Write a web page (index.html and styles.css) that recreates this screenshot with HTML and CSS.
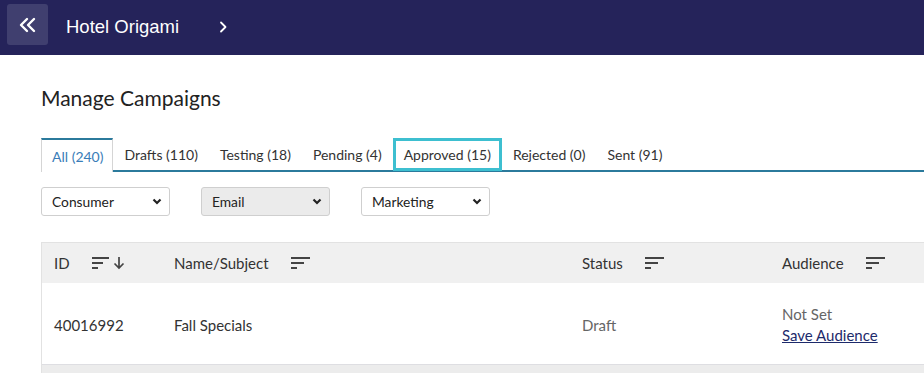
FILE: index.html
```html
<!DOCTYPE html>
<html>
<head>
<meta charset="utf-8">
<link rel="stylesheet" href="styles.css">
</head>
<body>
<header class="topbar">
  <button class="back-btn" aria-label="Back">
    <svg width="20" height="16" viewBox="0 0 20 16"><path d="M9 2 L3 8 L9 14 M16 2 L10 8 L16 14" fill="none" stroke="#fff" stroke-width="2.4" stroke-linecap="round" stroke-linejoin="round"/></svg>
  </button>
  <span class="hotel">Hotel Origami</span>
  <svg class="crumb" width="8" height="12" viewBox="0 0 8 12"><path d="M2 1.5 L6.5 6 L2 10.5" fill="none" stroke="#fff" stroke-width="1.8" stroke-linecap="round" stroke-linejoin="round"/></svg>
</header>
<main class="content">
  <h1 class="title">Manage Campaigns</h1>
  <nav class="tabs">
    <a class="tab active">All (240)</a>
    <a class="tab">Drafts (110)</a>
    <a class="tab">Testing (18)</a>
    <a class="tab">Pending (4)</a>
    <a class="tab focused">Approved (15)</a>
    <a class="tab">Rejected (0)</a>
    <a class="tab">Sent (91)</a>
  </nav>
  <div class="filters">
    <div class="select"><span>Consumer</span><svg width="10" height="7" viewBox="0 0 10 7"><path d="M1.5 1.5 L5 5 L8.5 1.5" fill="none" stroke="#222" stroke-width="2.2"/></svg></div>
    <div class="select disabled"><span>Email</span><svg width="10" height="7" viewBox="0 0 10 7"><path d="M1.5 1.5 L5 5 L8.5 1.5" fill="none" stroke="#222" stroke-width="2.2"/></svg></div>
    <div class="select"><span>Marketing</span><svg width="10" height="7" viewBox="0 0 10 7"><path d="M1.5 1.5 L5 5 L8.5 1.5" fill="none" stroke="#222" stroke-width="2.2"/></svg></div>
  </div>
  <div class="table">
    <div class="row head">
      <div class="cell c-id">ID <svg class="sort" width="34" height="14" viewBox="0 0 34 14"><path d="M0 2 H17 M0 7 H11 M0 12 H6" stroke="#444" stroke-width="1.8"/><path d="M27 1 V12 M22.5 7.5 L27 12 L31.5 7.5" fill="none" stroke="#444" stroke-width="1.7"/></svg></div>
      <div class="cell c-name">Name/Subject <svg class="sort" width="20" height="14" viewBox="0 0 20 14"><path d="M0 2 H19 M0 7 H13 M0 12 H6" stroke="#444" stroke-width="1.8"/></svg></div>
      <div class="cell c-status">Status <svg class="sort" width="20" height="14" viewBox="0 0 20 14"><path d="M0 2 H19 M0 7 H13 M0 12 H6" stroke="#444" stroke-width="1.8"/></svg></div>
      <div class="cell c-aud">Audience <svg class="sort" width="20" height="14" viewBox="0 0 20 14"><path d="M0 2 H19 M0 7 H13 M0 12 H6" stroke="#444" stroke-width="1.8"/></svg></div>
    </div>
    <div class="row body">
      <div class="cell c-id">40016992</div>
      <div class="cell c-name">Fall Specials</div>
      <div class="cell c-status muted">Draft</div>
      <div class="cell c-aud stack"><span class="muted">Not Set</span><a class="link">Save Audience</a></div>
    </div>
    <div class="row foot"></div>
  </div>
</main>
</body>
</html>
```
FILE: styles.css
```css
* { box-sizing: border-box; }
html, body { margin: 0; padding: 0; overflow: hidden; }
body {
  width: 924px;
  height: 373px;
  font-family: Lato, "Open Sans", sans-serif;
  color: #222;
  background: #fff;
}
.topbar {
  height: 55px;
  background: #25235a;
  display: flex;
  align-items: center;
  padding: 0 0 0 7px;
}
.back-btn {
  width: 41px;
  height: 41px;
  margin-top: -6px;
  border: 0;
  border-radius: 3px;
  background: #403f6f;
  display: flex;
  align-items: center;
  justify-content: center;
  padding: 0;
}
.hotel {
  font-family: "Liberation Sans", Arial, sans-serif;
  color: #fff;
  font-size: 18.5px;
  margin-left: 18px;
  margin-top: -1px;
}
.crumb { margin-left: 40px; margin-top: -1px; }
.content { padding: 0 0 0 41px; }
.title {
  font-weight: 400;
  font-size: 21px;
  margin: 28px 0 0 0;
  height: 55px;
  line-height: 30px;
  color: #222;
}
.tabs {
  display: flex;
  border-bottom: 2px solid #2b7a9c;
  height: 34px;
}
.tab {
  display: flex;
  align-items: center;
  padding: 0 10px 0 11px;
  font-size: 14px;
  color: #333;
  height: 33px;
  border-right: 1px solid transparent;
}
.tab.active {
  color: #3a7db8;
  border: 1px solid #d5d5d5;
  border-top: 2px solid #2b7a9c;
  border-bottom: 0;
  padding: 0 9px 0 10px;
  background: #fff;
  height: 34px;
  margin-bottom: -2px;
}
.tab.focused {
  outline: 3px solid #3dbfd0;
  outline-offset: -3px;
}
.filters {
  display: flex;
  gap: 31px;
  margin-top: 15px;
}
.select {
  width: 129px;
  height: 29px;
  border: 1px solid #cfcfcf;
  border-radius: 3px;
  display: flex;
  align-items: center;
  justify-content: space-between;
  padding: 0 7px 0 10px;
  font-size: 13.8px;
  color: #222;
  background: #fff;
}
.select.disabled { background: #ebebeb; }
.table {
  margin-top: 26px;
  border-left: 1px solid #e2e2e2;
  border-top: 1px solid #e2e2e2;
}
.row { display: flex; }
.row.head { height: 40px; background: #f0f0f0; align-items: center; }
.row.body { height: 82px; align-items: center; border-bottom: 1px solid #dedee2; }
.row.foot { height: 10px; background: #ececec; }
.cell {
  padding-left: 12px;
  font-size: 15px;
  color: #333;
  display: flex;
  align-items: center;
}
.row.body .cell { padding-top: 2px; }
.c-id { width: 120px; }
.c-name { width: 408px; }
.c-status { width: 200px; }
.c-aud { flex: 1; }
.sort { margin-left: 22px; }
.muted { color: #666; }
.stack { flex-direction: column; align-items: flex-start; gap: 3px; }
.link { color: #1d2a6b; text-decoration: underline; }
```
